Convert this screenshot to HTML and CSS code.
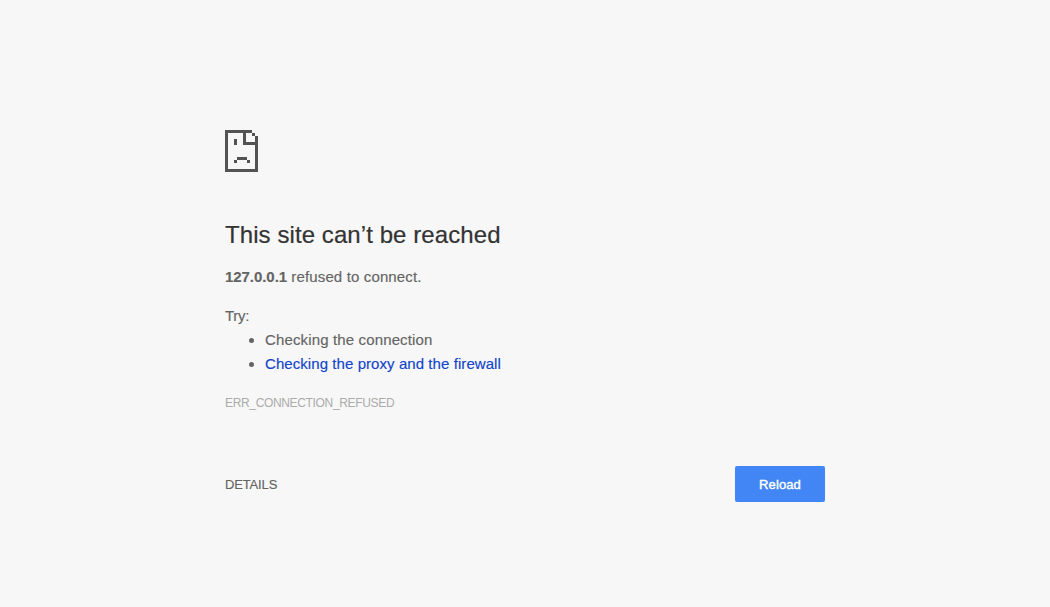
FILE: index.html
```html
<!DOCTYPE html>
<html lang="en">
<head>
<meta charset="utf-8">
<title>127.0.0.1</title>
<link rel="stylesheet" href="styles.css">
</head>
<body>
<main class="page">
  <svg class="icon" viewBox="0 0 33 42" shape-rendering="crispEdges" aria-hidden="true">
    <path fill="#535353" d="M0 0h27v3H0zM0 3h3v36H0zM0 39h33v3H0zM30 6h3v33h-3zM27 3h3v3h-3zM18 3h3v12h-3zM21 12h9v3h-9zM9 9h3v6H9zM12 27h10v3H12zM9 30h3v3H9zM22 30h3v3h-3z"/>
  </svg>
  <h1 class="title">This site can’t be reached</h1>
  <p class="summary"><strong class="host">127.0.0.1</strong> refused to connect.</p>
  <p class="try">Try:</p>
  <ul class="suggestions">
    <li class="suggestion">Checking the connection</li>
    <li><a class="link" href="#">Checking the proxy and the firewall</a></li>
  </ul>
  <div class="code">ERR_CONNECTION_REFUSED</div>
  <div class="actions">
    <button class="details">DETAILS</button>
    <button class="reload">Reload</button>
  </div>
</main>
</body>
</html>
```
FILE: styles.css
```css
body {
  margin: 0;
  background: #f7f7f7;
  color: #646464;
  font: 15px/24px "Liberation Sans", Arial, sans-serif;
}
.page { width: 600px; margin: 0 auto; padding-top: 130px; }
.icon { display: block; width: 33px; height: 42px; }
.title {
  margin: 48px 0 16px;
  color: #333;
  font-size: 24px;
  font-weight: 400;
  line-height: 29px;
  letter-spacing: 0.08px;
  -webkit-text-stroke: 0.2px;
}
.summary { margin: 0; letter-spacing: 0.14px; -webkit-text-stroke: 0.15px; }
.host { letter-spacing: -0.06px; }
.try { margin: 15px 0 0; letter-spacing: -0.3px; -webkit-text-stroke: 0.15px; }
.suggestions { margin: 0; padding-left: 40px; -webkit-text-stroke: 0.15px; }
.suggestion { letter-spacing: 0.14px; }
.link { color: #1144cc; text-decoration: none; letter-spacing: 0.07px; }
.code { margin-top: 15px; color: #ababab; font-size: 12px; letter-spacing: -0.34px; }
.actions {
  display: flex;
  align-items: center;
  justify-content: space-between;
  margin-top: 51px;
}
.details, .reload {
  height: 36px;
  padding: 1px 0 0;
  border: 0;
  font: 13px/35px "Liberation Sans", Arial, sans-serif;
}
.details {
  background: none;
  color: #646464;
  letter-spacing: -0.15px;
  -webkit-text-stroke: 0.15px;
}
.reload {
  width: 90px;
  border-radius: 2px;
  background: #4285f4;
  color: #fff;
  letter-spacing: 0.1px;
  -webkit-text-stroke: 0.4px;
}
```
